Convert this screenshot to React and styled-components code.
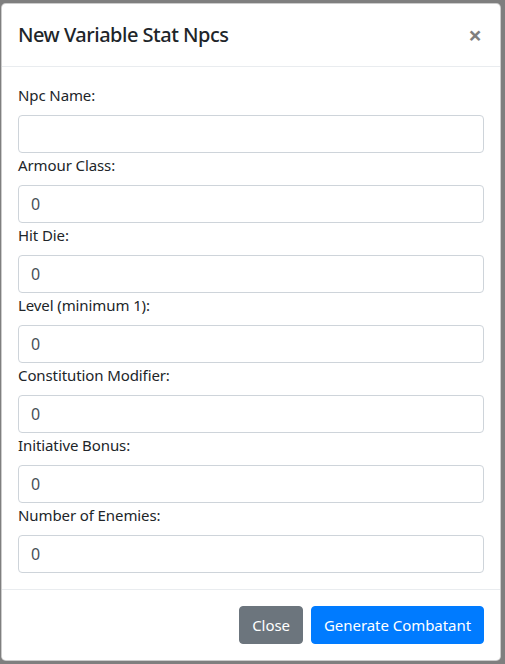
import React from 'react'
import styled, { createGlobalStyle } from 'styled-components'

const GlobalStyle = createGlobalStyle`
  * { box-sizing: border-box; }
  body {
    margin: 0;
    background: #7f7f7f;
    font-family: "Noto Sans", "Open Sans", sans-serif;
    color: #212529;
  }
`

const fields = [
  { label: 'Npc Name:', value: '' },
  { label: 'Armour Class:', value: '0' },
  { label: 'Hit Die:', value: '0' },
  { label: 'Level (minimum 1):', value: '0' },
  { label: 'Constitution Modifier:', value: '0' },
  { label: 'Initiative Bonus:', value: '0' },
  { label: 'Number of Enemies:', value: '0' },
]

const Backdrop = styled.div`
  min-height: 664px;
  padding: 3px 0 0 1px;
`

const Modal = styled.div`
  width: 500px;
  background: #fff;
  border: 1px solid rgba(0, 0, 0, 0.2);
  border-radius: 4.8px;
  display: flex;
  flex-direction: column;
`

const Header = styled.div`
  display: flex;
  align-items: center;
  justify-content: space-between;
  padding: 16px;
  border-bottom: 1px solid #e9ecef;
`

const Title = styled.h5`
  margin: 0;
  font-size: 20px;
  font-weight: 500;
  line-height: 30px;
  letter-spacing: -0.5px;
`

const CloseX = styled.button`
  border: 0;
  background: transparent;
  padding: 0;
  margin: 0 2px 0 0;
  font-size: 24px;
  font-weight: 700;
  line-height: 1;
  color: #000;
  opacity: 0.5;
  font-family: "Noto Sans", sans-serif;
`

const Body = styled.div`
  padding: 16px;
  display: flex;
  flex-direction: column;
`

const Label = styled.label`
  display: block;
  font-size: 15px;
  line-height: 24px;
  margin-bottom: 8px;
  letter-spacing: -0.1px;
`

const Input = styled.input`
  display: block;
  width: 100%;
  height: 38px;
  padding: 6px 12px;
  font-size: 16px;
  font-family: inherit;
  color: #495057;
  border: 1px solid #ced4da;
  border-radius: 4px;
  background: #fff;
`

const Footer = styled.div`
  display: flex;
  justify-content: flex-end;
  padding: 12px;
  border-top: 1px solid #e9ecef;
`

const Button = styled.button`
  margin: 4px;
  height: 38px;
  padding: 6px 12px;
  font-size: 15px;
  font-family: inherit;
  line-height: 24px;
  color: #fff;
  border: 1px solid ${p => p.$bg};
  background: ${p => p.$bg};
  border-radius: 4px;
  letter-spacing: -0.05px;
`

export default function App() {
  return (
    <>
      <GlobalStyle />
      <Backdrop>
        <Modal>
          <Header>
            <Title>New Variable Stat Npcs</Title>
            <CloseX>×</CloseX>
          </Header>
          <Body>
            {fields.map(f => (
              <div key={f.label}>
                <Label>{f.label}</Label>
                <Input defaultValue={f.value} />
              </div>
            ))}
          </Body>
          <Footer>
            <Button $bg="#6c757d">Close</Button>
            <Button $bg="#007bff">Generate Combatant</Button>
          </Footer>
        </Modal>
      </Backdrop>
    </>
  )
}
